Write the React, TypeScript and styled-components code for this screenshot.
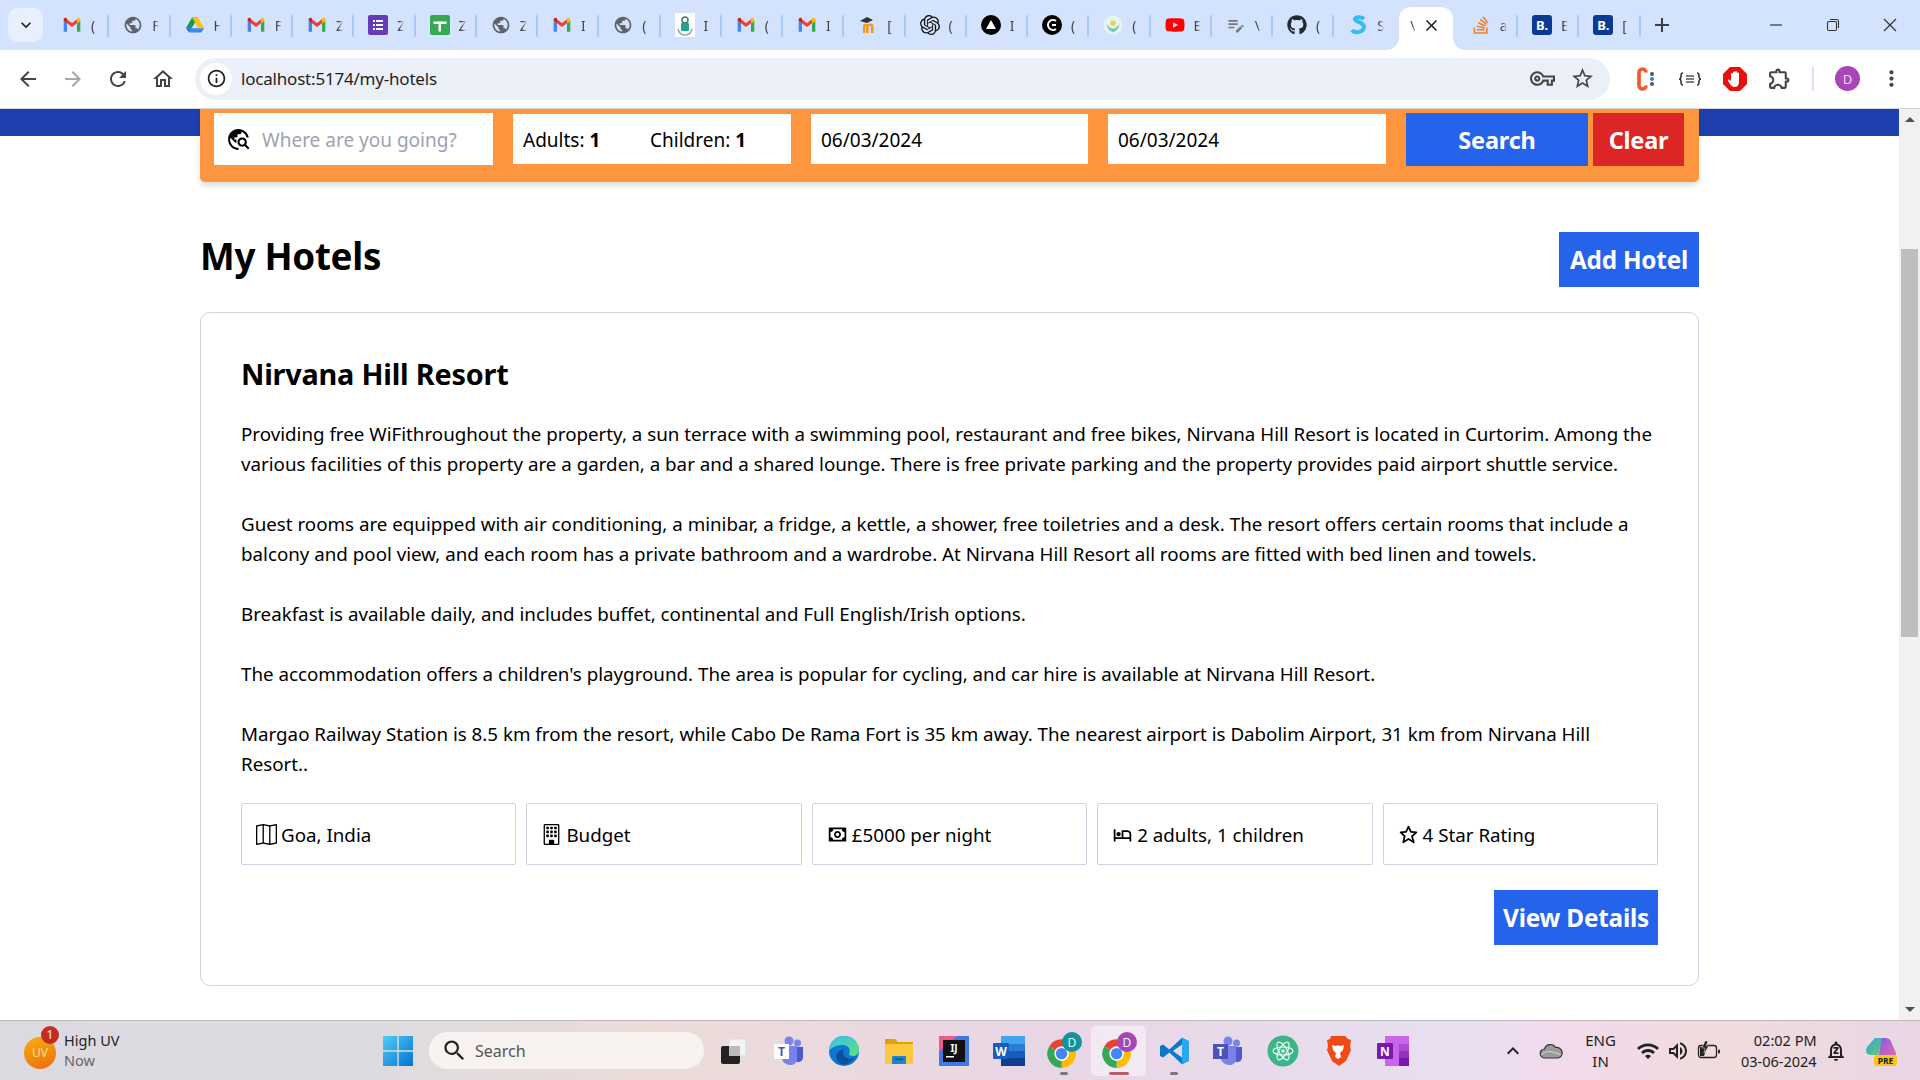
import { createGlobalStyle } from "styled-components";
import styled from "styled-components";
import type { ReactNode } from "react";
import { BiHotel, BiMoney, BiStar } from "react-icons/bi";
import { BsBuilding, BsMap } from "react-icons/bs";
import { FaGithub, FaStackOverflow, FaYoutube } from "react-icons/fa";
import {
  MdAdd,
  MdArrowBack,
  MdArrowForward,
  MdClose,
  MdExpandLess,
  MdExpandMore,
  MdInfoOutline,
  MdMoreVert,
  MdOutlineEditNote,
  MdOutlineExtension,
  MdOutlineHome,
  MdOutlineVpnKey,
  MdPublic,
  MdRefresh,
  MdSearch,
  MdStarBorder,
  MdTravelExplore,
  MdWifi,
  MdOutlineVolumeUp,
  MdOutlineNotificationsPaused,
} from "react-icons/md";
import { SiOpenai } from "react-icons/si";

const GlobalStyle = createGlobalStyle`
  html, body {
    margin: 0;
    height: 100%;
    overflow: hidden;
    background: #fff;
  }
  * { box-sizing: border-box; }
`;

const bodyFont = `"Noto Sans", "Open Sans", sans-serif`;

const Screen = styled.div`
  width: 1920px;
  height: 1080px;
  display: flex;
  flex-direction: column;
  font-family: ${bodyFont};
  color: #000;
`;

/* browser chrome */
const TabStrip = styled.div`
  height: 50px;
  flex-shrink: 0;
  background: #d3e3fd;
  display: flex;
  align-items: flex-end;
`;

const TabMenu = styled.div`
  width: 35px;
  height: 34px;
  margin: 0 5px 8px 8px;
  border-radius: 10px;
  background: #e9f0fd;
  display: flex;
  align-items: center;
  justify-content: center;
  font-size: 20px;
  color: #1f1f1f;
`;

const Tab = styled.div<{ $noSep?: boolean }>`
  width: 61.25px;
  height: 43px;
  flex-shrink: 0;
  display: flex;
  align-items: center;
  padding: 0 0 7px 14px;
  gap: 9px;
  position: relative;

  &::after {
    content: "";
    display: ${p => (p.$noSep ? "none" : "block")};
    position: absolute;
    right: 0;
    top: 8px;
    width: 2px;
    height: 22px;
    border-radius: 1px;
    background: #a8c7fa;
  }
`;

const ActiveTab = styled.div`
  width: 54px;
  height: 43px;
  margin: 0 3.625px;
  flex-shrink: 0;
  display: flex;
  align-items: center;
  padding: 0 0 7px 11px;
  gap: 7px;
  position: relative;
  background: #fff;
  border-radius: 12px 12px 0 0;

  &::before,
  &::after {
    content: "";
    position: absolute;
    bottom: 0;
    width: 12px;
    height: 12px;
  }

  &::before {
    left: -12px;
    background: radial-gradient(circle at 0 0, transparent 11.5px, #fff 12px);
  }

  &::after {
    right: -12px;
    background: radial-gradient(circle at 100% 0, transparent 11.5px, #fff 12px);
  }
`;

const FavIcon = styled.span`
  width: 20px;
  height: 20px;
  flex-shrink: 0;
  display: flex;
  align-items: center;
  justify-content: center;
  font-size: 20px;
`;

const TabLabel = styled.span`
  width: 7px;
  overflow: hidden;
  font-size: 14px;
  color: #444;
  white-space: nowrap;
  mask-image: linear-gradient(90deg, #000 35%, transparent 100%);
`;

const ActiveTabClose = styled.span`
  display: flex;
  font-size: 19px;
  margin-left: -2px;
  color: #1f1f1f;
`;

const NewTab = styled.div`
  width: 42px;
  height: 34px;
  margin-bottom: 8px;
  display: flex;
  align-items: center;
  justify-content: center;
  font-size: 24px;
  color: #3c4043;
`;

const WindowControls = styled.div`
  margin-left: auto;
  height: 50px;
  padding-right: 2px;
  display: flex;
  align-items: center;
`;

const WindowButton = styled.span`
  width: 57px;
  display: flex;
  justify-content: center;
  color: #333;
`;

const Toolbar = styled.div`
  height: 59px;
  flex-shrink: 0;
  background: #fff;
  border-bottom: 1px solid #d5d5d5;
  border-radius: 12px 12px 0 0;
  display: flex;
  align-items: center;
  padding: 0 0 1px 5px;
`;

const NavButton = styled.span<{ $muted?: boolean }>`
  width: 45px;
  display: flex;
  justify-content: center;
  font-size: 24px;
  color: ${p => (p.$muted ? "#a8a8a8" : "#444")};
`;

const Omnibox = styled.div`
  width: 1415px;
  height: 42px;
  margin-left: 10px;
  border-radius: 21px;
  background: #ebeff7;
  display: flex;
  align-items: center;
  padding: 0 8px 0 5px;
`;

const SiteInfo = styled.span`
  width: 32px;
  height: 32px;
  border-radius: 50%;
  background: #fff;
  display: flex;
  align-items: center;
  justify-content: center;
  font-size: 21px;
  color: #222;
`;

const Url = styled.span`
  margin-left: 9px;
  font-size: 17px;
  color: #1f1f1f;
  flex: 1;
  letter-spacing: -0.2px;
`;

const OmniIcon = styled.span`
  width: 40px;
  display: flex;
  justify-content: center;
  font-size: 25px;
  color: #444;
`;

const ExtensionRow = styled.div`
  display: flex;
  align-items: center;
  margin-left: 12px;
`;

const ExtensionIcon = styled.span`
  width: 45px;
  display: flex;
  justify-content: center;
  align-items: center;
  font-size: 25px;
  color: #444;
`;

const ToolbarDivider = styled.span`
  width: 2px;
  height: 24px;
  background: #d3e3fd;
  margin: 0 21px 0 10px;
`;

const Avatar = styled.span`
  width: 25px;
  height: 25px;
  border-radius: 50%;
  background: #a846b8;
  color: #f2dcf5;
  font-size: 13px;
  display: flex;
  align-items: center;
  justify-content: center;
  margin-right: 19px;
`;

const MenuDots = styled.span`
  display: flex;
  font-size: 25px;
  color: #444;
`;

/* page */
const Viewport = styled.div`
  flex: 1;
  min-height: 0;
  display: flex;
`;

const Page = styled.main`
  flex: 1;
  overflow: hidden;
  background: #fff;
`;

const BlueBand = styled.div`
  height: 27px;
  background: #1e40af;
`;

const Content = styled.div`
  width: 1499px;
  margin-left: 200px;
  display: flex;
  flex-direction: column;
`;

const SearchBar = styled.form`
  position: relative;
  margin-top: -27px;
  height: 73px;
  padding: 4px 14px 0;
  background: #fe953f;
  border-radius: 0 0 5px 5px;
  box-shadow: 0 4px 6px -1px rgba(0, 0, 0, 0.16);
  display: grid;
  grid-template-columns: 279px 278px 277px 278px 278px;
  column-gap: 20px;
  align-items: start;
`;

const DestinationField = styled.label`
  height: 52px;
  background: #fff;
  display: flex;
  align-items: center;
  padding-left: 12px;
  font-size: 25px;
`;

const PlainInput = styled.input`
  flex: 1;
  width: 100%;
  border: none;
  outline: none;
  padding: 2px 0 0;
  margin-left: 11px;
  font-family: ${bodyFont};
  font-size: 19px;
  color: #000;
  background: transparent;

  &::placeholder {
    color: #9ca3af;
    opacity: 1;
  }
`;

const GuestField = styled.div`
  height: 50px;
  margin-top: 1px;
  background: #fff;
  display: flex;
  align-items: center;
  padding: 2px 0 0 10px;
  font-size: 19px;
`;

const GuestCount = styled.span`
  width: 127px;
  flex-shrink: 0;

  b {
    font-weight: 700;
  }
`;

const DateInput = styled.input`
  height: 50px;
  margin-top: 1px;
  width: 100%;
  border: none;
  outline: none;
  padding: 2px 10px 0;
  background: #fff;
  font-family: ${bodyFont};
  font-size: 19px;
  color: #000;
`;

const ButtonPair = styled.div`
  display: flex;
  gap: 5px;
`;

const SearchButton = styled.button<{ $tone?: "blue" | "red" }>`
  height: 53px;
  padding: 0 10px;
  border: none;
  flex: ${p => (p.$tone === "red" ? "none" : "1")};
  width: ${p => (p.$tone === "red" ? "91px" : "auto")};
  background: ${p => (p.$tone === "red" ? "#dc2626" : "#2563eb")};
  color: #fff;
  font-family: ${bodyFont};
  font-size: 23.5px;
  font-weight: 700;
  letter-spacing: -0.2px;
  white-space: nowrap;
`;

const ActionButton = styled.button<{ $pad: number }>`
  height: 55px;
  padding: 0 ${p => p.$pad}px;
  border: none;
  background: #2563eb;
  color: #fff;
  font-family: ${bodyFont};
  font-size: 24.3px;
  font-weight: 700;
  letter-spacing: -0.2px;
  white-space: nowrap;
`;

const HeaderRow = styled.div`
  margin-top: 50px;
  display: flex;
  justify-content: space-between;
  align-items: flex-start;
`;

const PageTitle = styled.h1`
  margin: 2px 0 0;
  font-size: 36.8px;
  line-height: 45px;
  font-weight: 700;
  letter-spacing: -0.3px;
`;

const HotelCard = styled.article`
  margin-top: 25px;
  height: 674px;
  border: 1px solid #cbd5e1;
  border-radius: 10px;
  padding: 40px;
  display: flex;
  flex-direction: column;
`;

const HotelName = styled.h2`
  margin: 0 0 24px;
  font-size: 28.8px;
  line-height: 42px;
  font-weight: 700;
  letter-spacing: -0.2px;
`;

const Description = styled.p`
  margin: 0;
  font-size: 18.75px;
  line-height: 30px;
  white-space: pre-line;
`;

const FactGrid = styled.div`
  margin-top: 24px;
  display: grid;
  grid-template-columns: repeat(5, 1fr);
  gap: 10px;
`;

const FactChip = styled.div`
  height: 62px;
  border: 1px solid #cbd5e1;
  border-radius: 2px;
  padding: 0 14px;
  display: flex;
  align-items: center;
  gap: 4px;
  font-size: 18.75px;

  svg {
    flex-shrink: 0;
    font-size: 21px;
  }
`;

const CardActions = styled.div`
  margin-top: 25px;
  display: flex;
  justify-content: flex-end;
`;

const Scrollbar = styled.div`
  width: 21px;
  flex-shrink: 0;
  background: #f1f1f1;
  display: flex;
  flex-direction: column;
  align-items: center;
`;

const ScrollArrow = styled.span<{ $down?: boolean }>`
  height: 21px;
  display: flex;
  align-items: center;

  &::before {
    content: "";
    border-left: 5px solid transparent;
    border-right: 5px solid transparent;
    border-bottom: ${p => (p.$down ? "0" : "5px solid #505050")};
    border-top: ${p => (p.$down ? "5px solid #505050" : "0")};
  }
`;

const ScrollTrack = styled.div`
  flex: 1;
  width: 100%;
  padding-top: 119px;
`;

const ScrollThumb = styled.div`
  height: 388px;
  margin: 0 2px;
  background: #bebebe;
`;

/* windows taskbar */
const Taskbar = styled.footer`
  height: 60px;
  flex-shrink: 0;
  border-top: 1px solid #bdb8bd;
  background: linear-gradient(
    90deg,
    #dcdae0 0%,
    #dedbe0 20%,
    #ecdcd8 34%,
    #e8d6e6 55%,
    #e8dff0 76%,
    #f2daec 82%,
    #f0dcdc 90%,
    #e8d6e6 100%
  );
  display: flex;
  align-items: center;
  font-family: ${bodyFont};
`;

const WeatherBlock = styled.div`
  width: 383px;
  display: flex;
  align-items: center;
  padding-left: 24px;
  gap: 8px;
`;

const UvBadge = styled.span`
  position: relative;
  width: 32px;
  height: 32px;
  margin-top: 4px;
  border-radius: 50%;
  background: linear-gradient(160deg, #f3b10f, #ee6a10);
  color: #fbe08a;
  font-size: 12px;
  display: flex;
  align-items: center;
  justify-content: center;
`;

const UvCount = styled.span`
  position: absolute;
  top: -11px;
  right: -3px;
  width: 18px;
  height: 18px;
  border-radius: 50%;
  background: #c62b1f;
  color: #fff;
  font-size: 12px;
  display: flex;
  align-items: center;
  justify-content: center;
`;

const WeatherText = styled.div`
  font-size: 14.5px;
  line-height: 20px;
  color: #222;
  margin-top: -2px;
`;

const WeatherSub = styled.div`
  color: #666;
`;

const StartButton = styled.span`
  width: 30px;
  height: 30px;
  display: flex;
`;

const TaskSearch = styled.div`
  width: 277px;
  height: 39px;
  margin-left: 15px;
  border-radius: 20px;
  background: #f8f2f0;
  border: 1px solid #e4dcda;
  display: flex;
  align-items: center;
  padding-left: 12px;
  gap: 7px;
  font-size: 16px;
  color: #555;

  svg {
    font-size: 27px;
    color: #222;
  }
`;

const AppRow = styled.div`
  margin-left: 2px;
  display: flex;
`;

const AppCell = styled.span<{ $active?: boolean; $running?: boolean }>`
  position: relative;
  width: 54.9px;
  height: 50px;
  display: flex;
  align-items: center;
  justify-content: center;
  border-radius: 5px;
  background: ${p => (p.$active ? "rgba(255,255,255,0.45)" : "transparent")};

  &::after {
    content: "";
    display: ${p => (p.$running || p.$active ? "block" : "none")};
    position: absolute;
    bottom: 1px;
    left: 50%;
    transform: translateX(-50%);
    width: ${p => (p.$active ? "20px" : "8px")};
    height: 3px;
    border-radius: 2px;
    background: ${p => (p.$active ? "#b85c6c" : "#777")};
  }
`;

const Tray = styled.div`
  margin-left: 80px;
  display: flex;
  align-items: center;
`;

const TrayCell = styled.span<{ $w: number; $ml?: number }>`
  width: ${p => p.$w}px;
  margin-left: ${p => p.$ml ?? 0}px;
  display: flex;
  justify-content: center;
  align-items: center;
  font-size: 24px;
  color: #222;
`;

const Lang = styled.span`
  font-size: 15px;
  line-height: 21px;
  text-align: center;
  color: #222;
`;

const Clock = styled.span`
  width: 93px;
  font-size: 14.5px;
  line-height: 21px;
  text-align: right;
  color: #222;
  white-space: nowrap;
`;

/* drawn logos */
const Gmail = () => (
  <svg width="20" height="20" viewBox="0 0 24 24">
    <path fill="#4285F4" d="M2 20h4V10L2 7z" />
    <path fill="#34A853" d="M18 20h4V7l-4 3z" />
    <path fill="#FBBC04" d="M18 5v5l4-3V5.5c0-1.9-2.1-2.9-3.6-1.8z" />
    <path fill="#EA4335" d="M6 10V5l6 4.5L18 5v5l-6 4.5z" />
    <path fill="#C5221F" d="M2 5.5V7l4 3V5L5.6 3.7C4.1 2.6 2 3.6 2 5.5z" />
  </svg>
);

const Drive = () => (
  <svg width="20" height="20" viewBox="0 0 24 24">
    <path fill="#0F9D58" d="M8.5 3h7L8 16H1z" />
    <path fill="#FFC107" d="M15.500 3 23 16h-7L8.500 3z" />
    <path fill="#4285F4" d="M5 21 8 16h15l-3.500 5z" />
    <path fill="#1a73e8" d="M1 16h7l-3 5z" />
  </svg>
);

const Forms = () => (
  <svg width="20" height="20" viewBox="0 0 20 20">
    <rect width="20" height="20" rx="2" fill="#673ab7" />
    <rect x="5" y="5" width="2" height="2" fill="#fff" />
    <rect x="8" y="5" width="7" height="2" fill="#fff" />
    <rect x="5" y="9" width="2" height="2" fill="#fff" />
    <rect x="8" y="9" width="7" height="2" fill="#fff" />
    <rect x="5" y="13" width="2" height="2" fill="#fff" />
    <rect x="8" y="13" width="7" height="2" fill="#fff" />
  </svg>
);

const Sheets = () => (
  <svg width="20" height="20" viewBox="0 0 20 20">
    <rect width="20" height="20" rx="2" fill="#34a853" />
    <rect x="3.500" y="6.500" width="13" height="2.500" fill="#fff" />
    <rect x="8.500" y="6.500" width="2.500" height="10" fill="#fff" />
  </svg>
);

const Crest = () => (
  <svg width="20" height="24" viewBox="0 0 20 24">
    <rect width="20" height="24" fill="#fff" />
    <circle cx="10" cy="7" r="3" fill="none" stroke="#3f7f6f" strokeWidth="1.500" />
    <rect x="6" y="10" width="8" height="8" rx="1" fill="#1fa58a" />
    <path d="M3 16c1 5 4 6 7 6s6-1 7-6" fill="none" stroke="#9aa" strokeWidth="1.500" />
  </svg>
);

const Moodle = () => (
  <svg width="20" height="20" viewBox="0 0 20 20">
    <path d="M2 6 9 2l6 3-6 3z" fill="#333" />
    <path d="M5 18v-7c0-2 3-3 4.500-1.500C11 8 15 8 15.500 11v7h-2.500v-6.500c-.5-1-2-1-2.500 0V18H8v-6.500C7.500 10.500 7 11 7 12v6z" fill="#f7931e" />
  </svg>
);

const BlackDisc = ({ children }: { children: ReactNode }) => (
  <svg width="20" height="20" viewBox="0 0 20 20">
    <circle cx="10" cy="10" r="10" fill="#000" />
    {children}
  </svg>
);

const Lotus = () => (
  <svg width="22" height="22" viewBox="0 0 22 22">
    <circle cx="11" cy="11" r="10.500" fill="#e6f4ee" />
    <circle cx="11" cy="9" r="3" fill="#e8d44d" />
    <path d="M4 10c1 6 4 8 7 9 3-1 6-3 7-9-2 3-4 5-7 5s-5-2-7-5z" fill="#7cc4b4" />
  </svg>
);

const SLogo = () => (
  <svg width="20" height="22" viewBox="0 0 20 22">
    <path d="M16 5c-1.500-1.500-8-3-9 0s9 3 9 8-9 7-12 3" fill="none" stroke="#35bdf0" strokeWidth="4" />
  </svg>
);

const BookingMark = styled.span`
  width: 20px;
  height: 20px;
  border-radius: 3px;
  background: #0a3a92;
  color: #fff;
  font-size: 13px;
  font-weight: 700;
  display: flex;
  align-items: center;
  justify-content: center;
`;

const MinimizeGlyph = () => (
  <svg width="16" height="16" viewBox="0 0 16 16">
    <path d="M2 8h12" stroke="#333" strokeWidth="1.200" />
  </svg>
);

const RestoreGlyph = () => (
  <svg width="16" height="16" viewBox="0 0 16 16" fill="none" stroke="#333" strokeWidth="1.100">
    <rect x="2.500" y="4.500" width="9" height="9" rx="1.500" />
    <path d="M5 2.500h6.500a2 2 0 0 1 2 2V11" />
  </svg>
);

const CloseGlyph = () => (
  <svg width="16" height="16" viewBox="0 0 16 16">
    <path d="M2 2l12 12M14 2 2 14" stroke="#333" strokeWidth="1.200" />
  </svg>
);

const ProfileChrome = ({ bg }: { bg: string }) => (
  <svg width="40" height="40" viewBox="0 0 40 40">
    <g transform="translate(2 7) scale(1.300)">
      <path fill="#ea4335" d="M12 12 2.470 6.500A11 11 0 0 1 21.530 6.500z" />
      <path fill="#fbbc04" d="M12 12 21.530 6.500A11 11 0 0 1 12 23z" />
      <path fill="#34a853" d="M12 12 12 23A11 11 0 0 1 2.470 6.500z" />
      <circle cx="12" cy="12" r="5.600" fill="#fff" />
      <circle cx="12" cy="12" r="4.400" fill="#4285f4" />
    </g>
    <circle cx="28" cy="11" r="10" fill={bg} />
    <text x="28" y="15.500" textAnchor="middle" fontSize="12" fill="#dfe">D</text>
  </svg>
);

const Explorer = () => (
  <svg width="30" height="30" viewBox="0 0 30 30">
    <path d="M1 3h10l3 3h15v4H1z" fill="#e0a008" />
    <path d="M1 8h28v20H1z" fill="#fcc93e" />
    <path d="M9 20h12a1 1 0 0 1 1 1v7H8v-7a1 1 0 0 1 1-1z" fill="#1a86d0" />
    <rect x="11" y="22.500" width="8" height="1.600" fill="#0b4f8a" />
  </svg>
);

const Teams = ({ light }: { light?: boolean }) => (
  <svg width="32" height="32" viewBox="0 0 32 32">
    <circle cx="24.500" cy="8" r="3.500" fill="#7b83eb" />
    <circle cx="16" cy="6" r="4.500" fill="#7b83eb" />
    <path d="M19 12h11v10c0 3-2 5-5 5-2 0-4-1-5-3z" fill="#5059c9" />
    <path d="M9 11h15v13c0 4-3 6-7 6s-8-3-8-7z" fill="#7b83eb" />
    <rect x="1" y="9" width="15" height="15" fill={light ? "#fff" : "#4b53bc"} />
    <text x="8.500" y="21" textAnchor="middle" fontSize="12" fontWeight="700" fill={light ? "#4b53bc" : "#fff"}>T</text>
  </svg>
);

const Edge = () => (
  <svg width="32" height="32" viewBox="0 0 32 32">
    <defs>
      <linearGradient id="edgeTop" x1="0" y1="0" x2="1" y2="1">
        <stop offset="0" stopColor="#35c1f1" />
        <stop offset="1" stopColor="#5fe07a" />
      </linearGradient>
    </defs>
    <circle cx="16" cy="16" r="15" fill="#0c78d0" />
    <path d="M1 16C1 7 8 1 16 1c9 0 15 6 15 14 0 4-3 6-6 6-2 0-4-1-4-2 2-3 0-9-6-9-7 0-12 3-14 6z" fill="url(#edgeTop)" />
    <path d="M13 29c-5-2-6-8-3-12 2-2 5-3 6-2-2 2-1 6 3 8 2 1 6 1 8-1-3 5-9 9-14 7z" fill="#0a4f99" />
  </svg>
);

const IntelliJ = () => (
  <svg width="30" height="30" viewBox="0 0 30 30">
    <rect width="30" height="30" fill="#3d7be0" />
    <path d="M0 0h18L0 16z" fill="#ef5a8a" />
    <rect x="4" y="4" width="22" height="22" fill="#111" />
    <text x="15" y="16" textAnchor="middle" fontSize="10" fontWeight="700" fill="#fff">IJ</text>
    <rect x="7" y="20" width="8" height="1.500" fill="#fff" />
  </svg>
);

const Word = () => (
  <svg width="32" height="30" viewBox="0 0 32 30">
    <rect x="8" y="0" width="24" height="8" fill="#41a5ee" />
    <rect x="8" y="8" width="24" height="7" fill="#2b7cd3" />
    <rect x="8" y="15" width="24" height="7" fill="#185abd" />
    <rect x="8" y="22" width="24" height="8" fill="#103f91" />
    <rect x="0" y="7" width="16" height="16" rx="1" fill="#1a5cc0" />
    <text x="8" y="20" textAnchor="middle" fontSize="12" fontWeight="700" fill="#fff">W</text>
  </svg>
);

const VsCode = () => (
  <svg width="32" height="32" viewBox="0 0 24 24">
    <path fill="#0e78c8" d="M23 4.500 18 2 8.500 10.800 3.800 7.200 1.500 8.300v7.400l2.300 1.100 4.700-3.600L18 22l5-2.500zM18 16.900 11.200 12 18 7.100z" />
    <path fill="#26a9f2" d="M18 2 23 4.500v15L18 22z" />
  </svg>
);

const AtomApp = () => (
  <svg width="32" height="32" viewBox="0 0 32 32">
    <circle cx="16" cy="16" r="15.500" fill="#3eb489" />
    <g fill="none" stroke="#e6fff5" strokeWidth="1.200">
      <ellipse cx="16" cy="16" rx="10" ry="4" />
      <ellipse cx="16" cy="16" rx="10" ry="4" transform="rotate(60 16 16)" />
      <ellipse cx="16" cy="16" rx="10" ry="4" transform="rotate(120 16 16)" />
    </g>
    <circle cx="16" cy="16" r="1.800" fill="#e6fff5" />
  </svg>
);

const Brave = () => (
  <svg width="28" height="32" viewBox="0 0 28 32">
    <path d="M7 1h14l3 3 3 1-1 6 1 4-5 11-7 5-7-5-5-11 1-4-1-6 3-1z" fill="#f04a17" />
    <path d="M8 10l4 1 2-1 2 1 4-1-1 5-3 3 1 4-3 2-3-2 1-4-3-3z" fill="#fff" />
  </svg>
);

const OneNote = () => (
  <svg width="32" height="30" viewBox="0 0 32 30">
    <rect x="8" y="0" width="24" height="30" fill="#ca64ea" />
    <rect x="22" y="8" width="10" height="7" fill="#ae4bd5" />
    <rect x="22" y="15" width="10" height="7" fill="#9332bf" />
    <rect x="22" y="22" width="10" height="8" fill="#7719aa" />
    <rect x="0" y="7" width="16" height="16" rx="1" fill="#7719aa" />
    <text x="8" y="20" textAnchor="middle" fontSize="12" fontWeight="700" fill="#fff">N</text>
  </svg>
);

const Copilot = () => (
  <svg width="32" height="32" viewBox="0 0 32 32">
    <defs>
      <linearGradient id="copA" x1="0" y1="0" x2="1" y2="1">
        <stop offset="0" stopColor="#2aa0f0" />
        <stop offset="1" stopColor="#6ccf5c" />
      </linearGradient>
      <linearGradient id="copB" x1="0" y1="0" x2="1" y2="1">
        <stop offset="0" stopColor="#7a5cf0" />
        <stop offset="1" stopColor="#f06aa0" />
      </linearGradient>
    </defs>
    <path d="M10 3h8l-5 17H6c-5 0-6-4-4-8z" fill="url(#copA)" />
    <path d="M17 3h4c3 0 5 2 6 6l4 9c0 3-2 5-5 5H13z" fill="url(#copB)" />
    <rect x="9" y="20" width="23" height="11" rx="3" fill="#fcc419" />
    <text x="20.500" y="29" textAnchor="middle" fontSize="8.500" fontWeight="700" fill="#222">PRE</text>
  </svg>
);

const WinLogo = () => (
  <svg width="30" height="30" viewBox="0 0 30 30">
    <defs>
      <linearGradient id="winBlue" x1="0" y1="0" x2="1" y2="1">
        <stop offset="0" stopColor="#4fcdf8" />
        <stop offset="1" stopColor="#0672cf" />
      </linearGradient>
    </defs>
    <path d="M0 0h14.300v14.300H0zM15.700 0H30v14.300H15.700zM0 15.700h14.300V30H0zM15.700 15.700H30V30H15.700z" fill="url(#winBlue)" />
  </svg>
);

const TaskView = () => (
  <svg width="30" height="30" viewBox="0 0 30 30">
    <rect x="10" y="3" width="17" height="17" rx="2" fill="#f4f4f4" stroke="#ddd" />
    <rect x="2" y="10" width="19" height="18" rx="2" fill="#222" />
    <rect x="10" y="10" width="11" height="10" fill="#bbb" />
  </svg>
);

const CLogo = () => (
  <svg width="26" height="28" viewBox="0 0 26 28">
    <path d="M14 7.500a3.500 3.500 0 0 0-7 0v13a3.500 3.500 0 0 0 7 0" fill="none" stroke="#f4572c" strokeWidth="3.600" />
    <circle cx="20" cy="9" r="2" fill="#555" />
    <circle cx="20" cy="14" r="2" fill="#2a7de1" />
    <circle cx="20" cy="19" r="2" fill="#555" />
  </svg>
);

const BraceLogo = () => (
  <svg width="24" height="16" viewBox="0 0 24 16">
    <path d="M5 2C3 2 3 3 3 5s0 3-2 3c2 0 2 1 2 3s0 3 2 3M19 2c2 0 2 1 2 3s0 3 2 3c-2 0-2 1-2 3s0 3-2 3" fill="none" stroke="#222" strokeWidth="1.500" />
    <path d="M8 5h8M8 8h8M8 11h8" stroke="#555" strokeWidth="1.600" />
  </svg>
);

const StopHand = () => (
  <svg width="26" height="26" viewBox="0 0 26 26">
    <path d="M8 1h10l7 7v10l-7 7H8l-7-7V8z" fill="#e8100a" />
    <path d="M9 15V8a1 1 0 0 1 2 0V6.500a1 1 0 0 1 2 0V6a1 1 0 0 1 2 0v1.500a1 1 0 0 1 2 0V16c0 3-2 5-4 5-3 0-4-2-5-3l-2-3c-.6-1 .8-2 1.500-1z" fill="#fff" />
  </svg>
);

const TrayCloud = () => (
  <svg width="24" height="16" viewBox="0 0 24 16">
    <path d="M6 15a4.500 4.500 0 0 1-.5-9 6 6 0 0 1 11-1.500A5 5 0 0 1 19 15z" fill="#9a9a9a" stroke="#333" strokeWidth="1.200" />
    <path d="M2 12c4-4 10-5 20 0" fill="none" stroke="#ddd" strokeWidth="1" />
  </svg>
);

const TrayBattery = () => (
  <svg width="24" height="20" viewBox="0 0 24 20">
    <rect x="1.500" y="4.500" width="18" height="12" rx="2.500" fill="none" stroke="#222" strokeWidth="1.300" />
    <path d="M3 15V6h7l-3 9z" fill="#222" />
    <rect x="21" y="8.500" width="2" height="4" rx="1" fill="#222" />
    <path d="M8 0 5 7h3l-1 5 5-7H9l2-5z" fill="#222" stroke="#eee" strokeWidth="0.500" />
  </svg>
);

const tabs: { icon: ReactNode; label: string }[] = [
  { icon: <Gmail />, label: "(" },
  { icon: <MdPublic color="#5f6368" />, label: "F" },
  { icon: <Drive />, label: "H" },
  { icon: <Gmail />, label: "F" },
  { icon: <Gmail />, label: "Z" },
  { icon: <Forms />, label: "Z" },
  { icon: <Sheets />, label: "Z" },
  { icon: <MdPublic color="#5f6368" />, label: "Z" },
  { icon: <Gmail />, label: "I" },
  { icon: <MdPublic color="#5f6368" />, label: "(" },
  { icon: <Crest />, label: "I" },
  { icon: <Gmail />, label: "(" },
  { icon: <Gmail />, label: "I" },
  { icon: <Moodle />, label: "[" },
  { icon: <SiOpenai color="#111" />, label: "(" },
  { icon: <BlackDisc><path d="M10 5l5 9H5z" fill="#fff" /></BlackDisc>, label: "I" },
  { icon: <BlackDisc><path d="M14 6a5 5 0 1 0 0 8M10 10h4" fill="none" stroke="#fff" strokeWidth="2" /></BlackDisc>, label: "(" },
  { icon: <Lotus />, label: "(" },
  { icon: <FaYoutube color="#ff0000" />, label: "E" },
  { icon: <MdOutlineEditNote color="#777" />, label: "\\" },
  { icon: <FaGithub color="#24292f" />, label: "(" },
  { icon: <SLogo />, label: "S" },
];

const tabsAfterActive: { icon: ReactNode; label: string }[] = [
  { icon: <FaStackOverflow color="#f48024" />, label: "a" },
  { icon: <BookingMark>B.</BookingMark>, label: "E" },
  { icon: <BookingMark>B.</BookingMark>, label: "[" },
];

const description = `Providing free WiFithroughout the property, a sun terrace with a swimming pool, restaurant and free bikes, Nirvana Hill Resort is located in Curtorim. Among the various facilities of this property are a garden, a bar and a shared lounge. There is free private parking and the property provides paid airport shuttle service.

Guest rooms are equipped with air conditioning, a minibar, a fridge, a kettle, a shower, free toiletries and a desk. The resort offers certain rooms that include a balcony and pool view, and each room has a private bathroom and a wardrobe. At Nirvana Hill Resort all rooms are fitted with bed linen and towels.

Breakfast is available daily, and includes buffet, continental and Full English/Irish options.

The accommodation offers a children's playground. The area is popular for cycling, and car hire is available at Nirvana Hill Resort.

Margao Railway Station is 8.5 km from the resort, while Cabo De Rama Fort is 35 km away. The nearest airport is Dabolim Airport, 31 km from Nirvana Hill Resort..`;

const facts = [
  { icon: <BsMap />, text: "Goa, India" },
  { icon: <BsBuilding />, text: "Budget" },
  { icon: <BiMoney />, text: "£5000 per night" },
  { icon: <BiHotel />, text: "2 adults, 1 children" },
  { icon: <BiStar />, text: "4 Star Rating" },
];

export default function App() {
  return (
    <Screen>
      <GlobalStyle />

      <TabStrip>
        <TabMenu><MdExpandMore /></TabMenu>
        {tabs.map((t, i) => (
          <Tab key={i} $noSep={i === tabs.length - 1}>
            <FavIcon>{t.icon}</FavIcon>
            <TabLabel>{t.label}</TabLabel>
          </Tab>
        ))}
        <ActiveTab>
          <TabLabel>\</TabLabel>
          <ActiveTabClose><MdClose /></ActiveTabClose>
        </ActiveTab>
        {tabsAfterActive.map((t, i) => (
          <Tab key={i}>
            <FavIcon>{t.icon}</FavIcon>
            <TabLabel>{t.label}</TabLabel>
          </Tab>
        ))}
        <NewTab><MdAdd /></NewTab>
        <WindowControls>
          <WindowButton><MinimizeGlyph /></WindowButton>
          <WindowButton><RestoreGlyph /></WindowButton>
          <WindowButton><CloseGlyph /></WindowButton>
        </WindowControls>
      </TabStrip>

      <Toolbar>
        <NavButton><MdArrowBack /></NavButton>
        <NavButton $muted><MdArrowForward /></NavButton>
        <NavButton><MdRefresh /></NavButton>
        <NavButton><MdOutlineHome /></NavButton>
        <Omnibox>
          <SiteInfo><MdInfoOutline /></SiteInfo>
          <Url>localhost:5174/my-hotels</Url>
          <OmniIcon><MdOutlineVpnKey /></OmniIcon>
          <OmniIcon><MdStarBorder /></OmniIcon>
        </Omnibox>
        <ExtensionRow>
          <ExtensionIcon><CLogo /></ExtensionIcon>
          <ExtensionIcon><BraceLogo /></ExtensionIcon>
          <ExtensionIcon><StopHand /></ExtensionIcon>
          <ExtensionIcon><MdOutlineExtension /></ExtensionIcon>
          <ToolbarDivider />
          <Avatar>D</Avatar>
          <MenuDots><MdMoreVert /></MenuDots>
        </ExtensionRow>
      </Toolbar>

      <Viewport>
        <Page>
          <BlueBand />
          <Content>
            <SearchBar>
              <DestinationField>
                <MdTravelExplore />
                <PlainInput placeholder="Where are you going?" readOnly />
              </DestinationField>
              <GuestField>
                <GuestCount>Adults: <b>1</b></GuestCount>
                <GuestCount>Children: <b>1</b></GuestCount>
              </GuestField>
              <DateInput defaultValue="06/03/2024" />
              <DateInput defaultValue="06/03/2024" />
              <ButtonPair>
                <SearchButton type="button">Search</SearchButton>
                <SearchButton type="button" $tone="red">Clear</SearchButton>
              </ButtonPair>
            </SearchBar>

            <HeaderRow>
              <PageTitle>My Hotels</PageTitle>
              <ActionButton type="button" $pad={11}>Add Hotel</ActionButton>
            </HeaderRow>

            <HotelCard>
              <HotelName>Nirvana Hill Resort</HotelName>
              <Description>{description}</Description>
              <FactGrid>
                {facts.map(f => (
                  <FactChip key={f.text}>
                    {f.icon}
                    {f.text}
                  </FactChip>
                ))}
              </FactGrid>
              <CardActions>
                <ActionButton type="button" $pad={9}>View Details</ActionButton>
              </CardActions>
            </HotelCard>
          </Content>
        </Page>
        <Scrollbar>
          <ScrollArrow />
          <ScrollTrack><ScrollThumb /></ScrollTrack>
          <ScrollArrow $down />
        </Scrollbar>
      </Viewport>

      <Taskbar>
        <WeatherBlock>
          <UvBadge>
            UV
            <UvCount>1</UvCount>
          </UvBadge>
          <WeatherText>
            High UV
            <WeatherSub>Now</WeatherSub>
          </WeatherText>
        </WeatherBlock>
        <StartButton><WinLogo /></StartButton>
        <TaskSearch>
          <MdSearch />
          Search
        </TaskSearch>
        <AppRow>
          <AppCell><TaskView /></AppCell>
          <AppCell><Teams light /></AppCell>
          <AppCell><Edge /></AppCell>
          <AppCell><Explorer /></AppCell>
          <AppCell><IntelliJ /></AppCell>
          <AppCell><Word /></AppCell>
          <AppCell $running><ProfileChrome bg="#14919b" /></AppCell>
          <AppCell $active><ProfileChrome bg="#a846b8" /></AppCell>
          <AppCell $running><VsCode /></AppCell>
          <AppCell><Teams /></AppCell>
          <AppCell><AtomApp /></AppCell>
          <AppCell><Brave /></AppCell>
          <AppCell><OneNote /></AppCell>
        </AppRow>
        <Tray>
          <TrayCell $w={24}><MdExpandLess /></TrayCell>
          <TrayCell $w={52}><TrayCloud /></TrayCell>
          <TrayCell $w={48}><Lang>ENG<br />IN</Lang></TrayCell>
          <TrayCell $w={24} $ml={11}><MdWifi /></TrayCell>
          <TrayCell $w={30} $ml={3}><MdOutlineVolumeUp /></TrayCell>
          <TrayCell $w={30} $ml={1}><TrayBattery /></TrayCell>
          <Clock>02:02 PM<br />03-06-2024</Clock>
          <TrayCell $w={38}><MdOutlineNotificationsPaused /></TrayCell>
          <TrayCell $w={52}><Copilot /></TrayCell>
        </Tray>
      </Taskbar>
    </Screen>
  );
}
